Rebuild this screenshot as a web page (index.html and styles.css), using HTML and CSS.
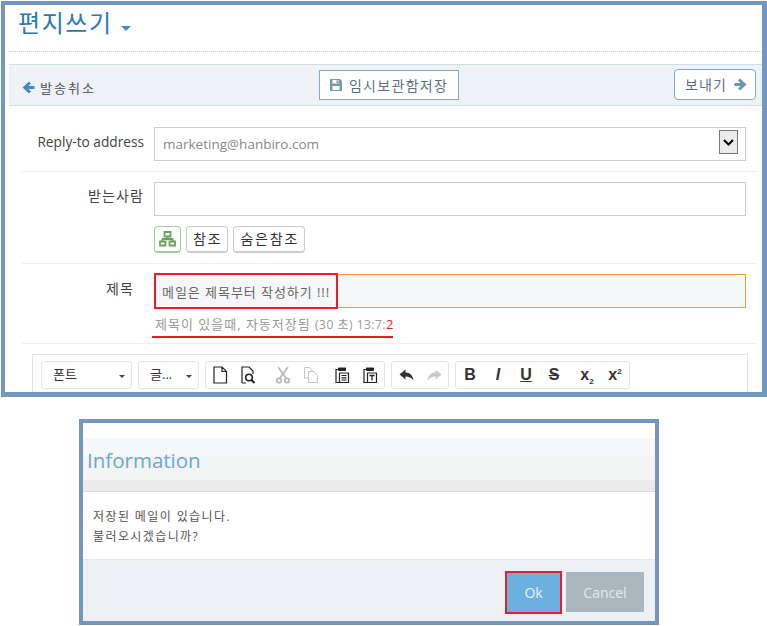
FILE: index.html
```html
<!DOCTYPE html>
<html lang="ko">
<head>
  <meta charset="UTF-8" />
  <title>편지쓰기</title>
  <link rel="stylesheet" href="styles.css">
</head>
<body>
  <div class="compose">
    <div class="page-head">
      <h1>편지쓰기</h1>
      <span class="caret-title"></span>
    </div>
    <div class="action-bar">
      <a class="cancel-link">
        <svg width="13" height="13" viewBox="0 0 13 13"><path d="M7 .5 .5 6.500 7 12.500 9 10.500 6.500 8H12.500V5H6.500L9 2.500z" fill="#428bca"/></svg>
        발송취소
      </a>
      <button class="btn-draft">
        <svg width="14" height="14" viewBox="0 0 14 14"><path d="M1 1H11L13 3V13H1z" fill="#7a97b3"/><path d="M3.500 2H9.500V5.500H3.500zM3.500 8H10.500V12H3.500z" fill="#fff"/><path d="M7.500 2.500H9V5H7.500z" fill="#7a97b3"/></svg>
        임시보관함저장
      </button>
      <button class="btn-send">
        보내기
        <svg width="13" height="13" viewBox="0 0 13 13"><path d="M6 .5 12.500 6.500 6 12.500 4 10.500 6.500 8H.5V5H6.500L4 2.500z" fill="#6a93b5"/></svg>
      </button>
    </div>

    <div class="form-row row-reply">
      <label>Reply-to address</label>
      <div class="field select-field">
        <span>marketing@hanbiro.com</span>
        <span class="select-arrow">
          <svg width="11" height="7" viewBox="0 0 11 7"><path d="M1 1 5.500 5.500 10 1" fill="none" stroke="#000" stroke-width="2"/></svg>
        </span>
      </div>
    </div>

    <div class="form-row row-to">
      <label>받는사람</label>
      <div class="field-col">
        <div class="field"></div>
        <div class="to-buttons">
          <button class="btn-small btn-org">
            <svg width="17" height="16" viewBox="0 0 17 16" fill="none" stroke="#6aa35f" stroke-width="1.800"><path d="M5.500 1H11.500V5.500H5.500zM8.500 5.500V8M3.500 10.500V8H13.500V10.500M1 10.500H6.500V14.500H1zM10.500 10.500H16V14.500H10.500z"/></svg>
          </button>
          <button class="btn-small">참조</button>
          <button class="btn-small">숨은참조</button>
        </div>
      </div>
    </div>

    <div class="form-row row-subject">
      <label>제목</label>
      <div class="field-col">
        <div class="field subject-field">메일은 제목부터 작성하기 !!!</div>
        <p class="autosave">제목이 있을때, 자동저장됨 <small>(30 초) 13:7:</small><b>2</b></p>
        <span class="mark-subject"></span>
        <span class="mark-line"></span>
      </div>
    </div>

    <div class="editor">
      <div class="tool-group drop drop-font">폰트<i></i></div>
      <div class="tool-group drop drop-size">글...<i></i></div>
      <div class="tool-group">
        <span class="tool">
          <svg width="16" height="18" viewBox="0 0 16 18" fill="none" stroke="#222" stroke-width="1.200"><path d="M2 1H10L14.500 5.500V17H2zM10 1V5.500H14.500"/></svg>
        </span>
        <span class="tool">
          <svg width="16" height="18" viewBox="0 0 16 18" fill="none" stroke="#222" stroke-width="1.200"><path d="M2 17V1H9L13 5V8M2 17H6"/><circle cx="9" cy="11.500" r="3.300" stroke-width="1.600"/><path d="M11.500 14 14.500 17" stroke-width="2"/></svg>
        </span>
        <span class="tool tool-gap">
          <svg width="16" height="18" viewBox="0 0 16 18" fill="none" stroke="#bbb" stroke-width="1.800"><path d="M3 1 11 12M13 1 5 12"/><circle cx="4" cy="14.500" r="2.200"/><circle cx="12" cy="14.500" r="2.200"/></svg>
        </span>
        <span class="tool">
          <svg width="16" height="18" viewBox="0 0 16 18" fill="none" stroke="#c4c4c4"><path d="M1.500 1.500H6.500L9 4V5M1.500 1.500V12H5M5.500 5.500H10.500L14.500 9.500V16.500H5.500z"/></svg>
        </span>
        <span class="tool tool-gap-s">
          <svg width="16" height="18" viewBox="0 0 16 18" fill="none" stroke="#222"><path d="M4 3.500H2V16.500H5" stroke-width="1.200"/><path d="M4.500 2H11.500V4.500H4.500z" fill="#222"/><path d="M5.500 7H14.500V16.500H5.500z" stroke-width="1.200"/><path d="M7.500 9.500H12.500M7.500 11.800H12.500M7.500 14H12.500" stroke-width="1.200"/></svg>
        </span>
        <span class="tool">
          <svg width="16" height="18" viewBox="0 0 16 18" fill="none" stroke="#222"><path d="M4 3.500H2V16.500H5" stroke-width="1.200"/><path d="M4.500 2H11.500V4.500H4.500z" fill="#222"/><path d="M5.500 7H14.500V16.500H5.500z" stroke-width="1.200"/><path d="M7.500 9.500H12.500M10 9.500V14.500" stroke-width="1.300"/></svg>
        </span>
      </div>
      <div class="tool-group">
        <span class="tool">
          <svg width="15" height="12" viewBox="0 0 15 12"><path d="M6.500 .5 .5 5.500 6.500 10.500V7.500C10 7.500 12 8.500 14.500 11.500 14 6.500 11 3.500 6.500 3.500z" fill="#333"/></svg>
        </span>
        <span class="tool">
          <svg width="15" height="12" viewBox="0 0 15 12"><path d="M8.500 .5 14.500 5.500 8.500 10.500V7.500C5 7.500 3 8.500 .5 11.500 1 6.500 4 3.500 8.500 3.500z" fill="#c9c9c9"/></svg>
        </span>
      </div>
      <div class="tool-group">
        <span class="tool tool-text"><b>B</b></span>
        <span class="tool tool-text"><b class="ital">I</b></span>
        <span class="tool tool-text"><b class="under">U</b></span>
        <span class="tool tool-text"><b class="strike">S</b></span>
        <span class="tool tool-text tool-script tool-gap-xs"><span><b>x</b><sub>2</sub></span></span>
        <span class="tool tool-text tool-script"><span><b>x</b><sup>2</sup></span></span>
      </div>
    </div>
  </div>

  <div class="dialog">
    <div class="dialog-head">
      <h2>Information</h2>
    </div>
    <div class="dialog-body">
      저장된 메일이 있습니다.<br>
      불러오시겠습니까?
    </div>
    <div class="dialog-foot">
      <button class="btn-ok">Ok</button>
      <button class="btn-cancel">Cancel</button>
    </div>
  </div>
</body>
</html>
```

FILE: styles.css
```css
body {
  margin: 0;
  background: #fff;
  font-family: "Open Sans", "Noto Sans CJK KR", sans-serif;
  color: #444;
}
button {
  font-family: inherit;
  cursor: pointer;
}

/* compose frame */
.compose {
  box-sizing: border-box;
  width: 766px;
  height: 396px;
  margin: 1px 0 0 1px;
  border: 4px solid #7396c2;
  border-right-width: 5px;
  border-bottom-width: 5px;
  overflow: hidden;
}
.page-head {
  display: flex;
  align-items: center;
  height: 46px;
  margin-left: 5px;
  border-bottom: 1px dotted #ccc;
}
.page-head h1 {
  margin: 0 0 0 8px;
  font-size: 24px;
  line-height: 36px;
  font-weight: 400;
  letter-spacing: 1.6px;
  color: #2a7ab8;
  position: relative;
  top: -5px;
}
.caret-title {
  width: 0;
  height: 0;
  margin: 0 0 0 8px;
  border-top: 5px solid #428bca;
  border-left: 5px solid transparent;
  border-right: 5px solid transparent;
}
.action-bar {
  box-sizing: border-box;
  display: flex;
  justify-content: space-between;
  align-items: center;
  height: 42px;
  margin: 12px 0 0 4px;
  padding: 0 6px 0 13px;
  background: #eff3f8;
  border-top: 1px solid #cfdde8;
  border-bottom: 1px solid #d5dde5;
}
.cancel-link {
  display: flex;
  align-items: center;
  gap: 5px;
  margin-top: 4px;
  font-size: 13px;
  letter-spacing: 2px;
  color: #555;
}
.btn-draft {
  display: flex;
  align-items: center;
  gap: 6px;
  box-sizing: border-box;
  width: 140px;
  height: 30px;
  padding: 0 0 0 9px;
  margin-left: 8px;
  background: #fff;
  border: 1px solid #86a9c8;
  font-size: 14px;
  letter-spacing: 1.3px;
  color: #5d7183;
}
.btn-send {
  display: flex;
  align-items: center;
  gap: 7px;
  box-sizing: border-box;
  width: 82px;
  height: 31px;
  padding: 0 0 0 10px;
  margin-top: -2px;
  background: #fff;
  border: 1px solid #86a9c8;
  border-radius: 4px;
  font-size: 14px;
  letter-spacing: 1.1px;
  color: #5d7183;
}

/* form rows */
.form-row {
  display: flex;
  margin: 0 6px 0 17px;
  border-bottom: 1px solid #eee;
}
.form-row label {
  width: 122px;
  padding-right: 10px;
  text-align: right;
  font-size: 14px;
  line-height: 20px;
  letter-spacing: 1.1px;
  color: #444;
}
.row-reply {
  height: 66px;
  padding-top: 21px;
  box-sizing: border-box;
}
.row-reply label {
  padding-top: 5px;
  font-size: 13.7px;
  letter-spacing: 0;
}
.row-to {
  height: 92px;
  padding-top: 10px;
  box-sizing: border-box;
}
.row-to label {
  padding-top: 4px;
}
.row-subject {
  height: 80px;
  padding-top: 10px;
  box-sizing: border-box;
}
.row-subject label {
  width: 112px;
  padding: 5px 20px 0 0;
}
.field-col {
  position: relative;
  flex: 1;
  margin-right: 10px;
}
.field {
  box-sizing: border-box;
  height: 34px;
  background: #fff;
  border: 1px solid #ccc;
}
.select-field {
  flex: 1;
  margin-right: 10px;
  display: flex;
  justify-content: space-between;
  align-items: center;
  padding: 0 7px 0 8px;
  font-size: 13.5px;
  color: #888;
}
.select-arrow {
  box-sizing: border-box;
  display: flex;
  align-items: center;
  justify-content: center;
  width: 19px;
  height: 24px;
  margin-top: -4px;
  background: #ececec;
  border: 1px solid #777;
}
.to-buttons {
  display: flex;
  gap: 5px;
  margin-top: 10px;
}
.btn-small {
  box-sizing: border-box;
  height: 27px;
  padding: 0 5px 0 6px;
  background: #fff;
  border: 1px solid #ccc;
  border-bottom-width: 2px;
  border-radius: 4px;
  font-size: 14px;
  line-height: 20px;
  letter-spacing: 1.8px;
  color: #333;
}
.btn-org {
  display: flex;
  align-items: center;
  justify-content: center;
  width: 27px;
  padding: 0;
  border-color: #a5cc9e;
}
.subject-field {
  display: flex;
  align-items: center;
  padding: 0 8px 0 7px;
  background: #f6f7f9;
  border-color: #ee9b3e;
  font-size: 13px;
  letter-spacing: .95px;
  color: #666;
}
.autosave {
  margin: 7px 0 0 1px;
  font-size: 13px;
  line-height: 18px;
  letter-spacing: 1px;
  color: #999;
}
.autosave small {
  font-size: 12px;
  letter-spacing: .5px;
}
.autosave b {
  font-weight: 400;
  font-size: 13px;
  color: #f01a24;
}
.mark-subject {
  position: absolute;
  left: 0;
  top: -1px;
  box-sizing: border-box;
  width: 184px;
  height: 36px;
  border: 2px solid #ed1c24;
}
.mark-line {
  position: absolute;
  left: -2px;
  top: 62px;
  width: 241px;
  height: 2px;
  background: #ed1c24;
}

/* editor toolbar */
.editor {
  box-sizing: border-box;
  display: flex;
  align-items: flex-start;
  gap: 6px;
  width: 716px;
  height: 60px;
  margin: 10px 0 0 27px;
  padding: 6px 8px;
  border: 1px solid #e2e2e2;
}
.tool-group {
  box-sizing: border-box;
  display: flex;
  align-items: center;
  height: 28px;
  border: 1px solid #e4e4e4;
  border-radius: 3px;
}
.drop {
  position: relative;
  padding: 0 0 3px 11px;
  font-size: 13px;
  color: #333;
}
.drop i {
  position: absolute;
  right: 6px;
  top: 13px;
  border-top: 3px solid #444;
  border-left: 3px solid transparent;
  border-right: 3px solid transparent;
}
.drop-font {
  width: 91px;
}
.drop-size {
  width: 61px;
}
.tool {
  display: flex;
  align-items: center;
  justify-content: center;
  width: 28px;
  height: 26px;
}
.tool-gap {
  margin-left: 7px;
}
.tool-gap-s {
  margin-left: 3px;
}
.tool-gap-xs {
  margin-left: 5px;
}
.tool-text {
  font-family: "Liberation Sans", sans-serif;
  font-size: 16px;
  color: #333;
}
.ital {
  font-style: italic;
}
.under {
  text-decoration: underline;
}
.strike {
  text-decoration: line-through;
}
.tool-script sub,
.tool-script sup {
  font-size: 8px;
  font-weight: 700;
  line-height: 0;
}

/* dialog */
.dialog {
  box-sizing: border-box;
  width: 580px;
  height: 206px;
  margin: 22px 0 0 79px;
  border: 4px solid #7396c2;
}
.dialog-head {
  height: 53px;
  margin-top: 15px;
  background: linear-gradient(#f6f7f9 0, #f6f7f9 17px, #f3f4f4 17px, #f3f4f4 42px, #ebebeb 42px);
  border-bottom: 1px solid #ddd;
}
.dialog-head h2 {
  margin: 0;
  padding: 7px 0 0 4px;
  font-size: 20.5px;
  line-height: 30px;
  font-weight: 400;
  color: #6aa7d3;
}
.dialog-body {
  box-sizing: border-box;
  height: 68px;
  padding: 15px 10px 0;
  font-size: 12px;
  line-height: 20px;
  letter-spacing: 1.4px;
  color: #555;
  border-bottom: 1px solid #e6e9ee;
}
.dialog-foot {
  display: flex;
  justify-content: flex-end;
  align-items: flex-start;
  gap: 4px;
  height: 61px;
  padding: 11px 11px 0 0;
  box-sizing: border-box;
  background: #edf0f5;
}
.btn-ok {
  width: 57px;
  height: 43px;
  background: #6cb0e0;
  border: 2px solid #ed1c24;
  font-size: 14px;
  color: #e8f2fa;
}
.btn-cancel {
  width: 78px;
  height: 40px;
  margin-top: 1px;
  background: #aab7bf;
  border: 0;
  font-size: 14px;
  color: #e4e9ec;
}
```
